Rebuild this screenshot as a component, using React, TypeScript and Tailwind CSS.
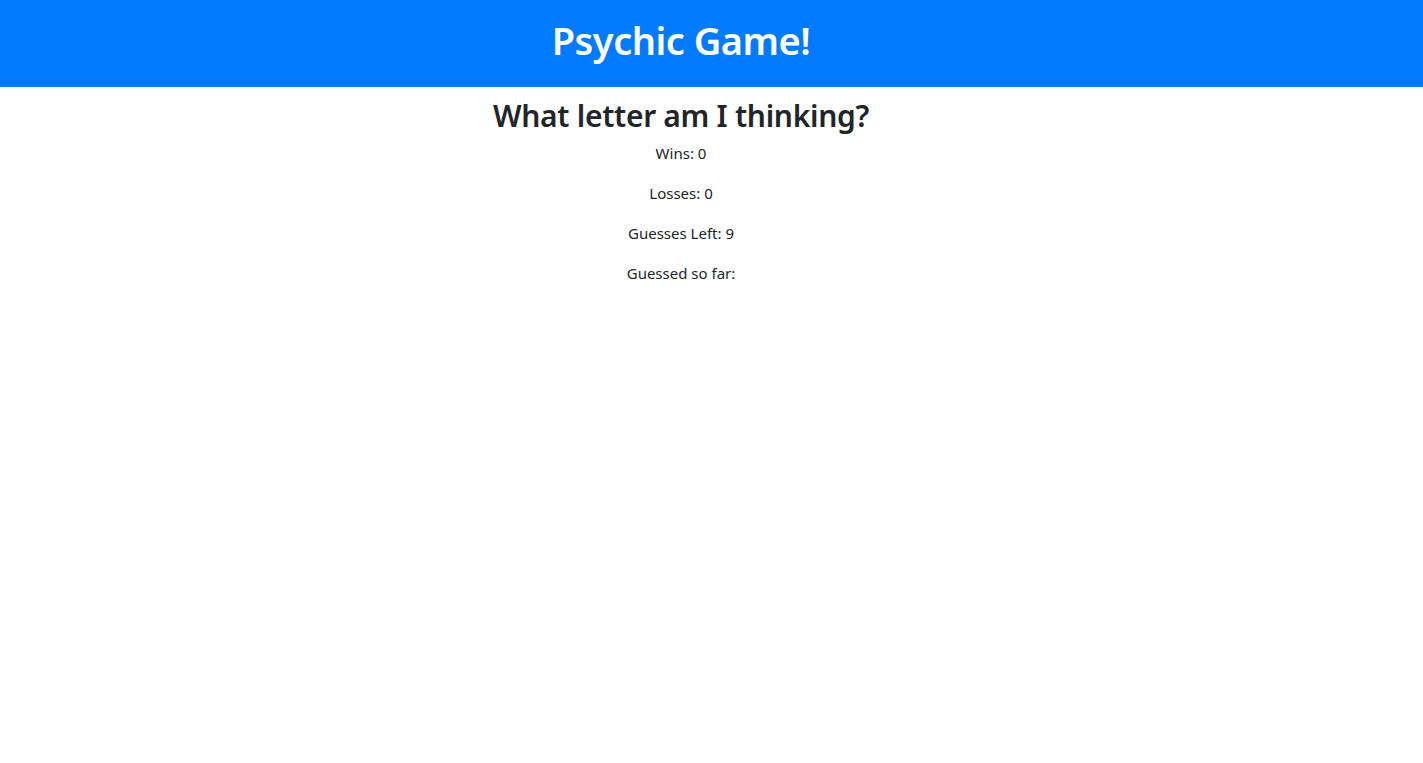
export default function App() {
  return (
    <div className="min-h-screen bg-white font-['Noto_Sans',sans-serif] text-[#212529]">
      <header className="bg-[#007bff] pt-4 pb-[15px] mb-[10px]">
        <div className="pr-[61px] text-center">
          <h1 className="text-[38px] leading-[48px] font-semibold tracking-[-0.5px] text-white mb-2">Psychic Game!</h1>
        </div>
      </header>
      <main className="pr-[61px] text-center">
        <h2 className="text-[30px] leading-[38px] font-semibold tracking-[-0.3px] mb-[6px]">What letter am I thinking?</h2>
        <p className="text-[15px] leading-6 mb-4">Wins: 0</p>
        <p className="text-[15px] leading-6 mb-4">Losses: 0</p>
        <p className="text-[15px] leading-6 mb-4">Guesses Left: 9</p>
        <p className="text-[15px] leading-6 mb-4">Guessed so far:</p>
      </main>
    </div>
  )
}
